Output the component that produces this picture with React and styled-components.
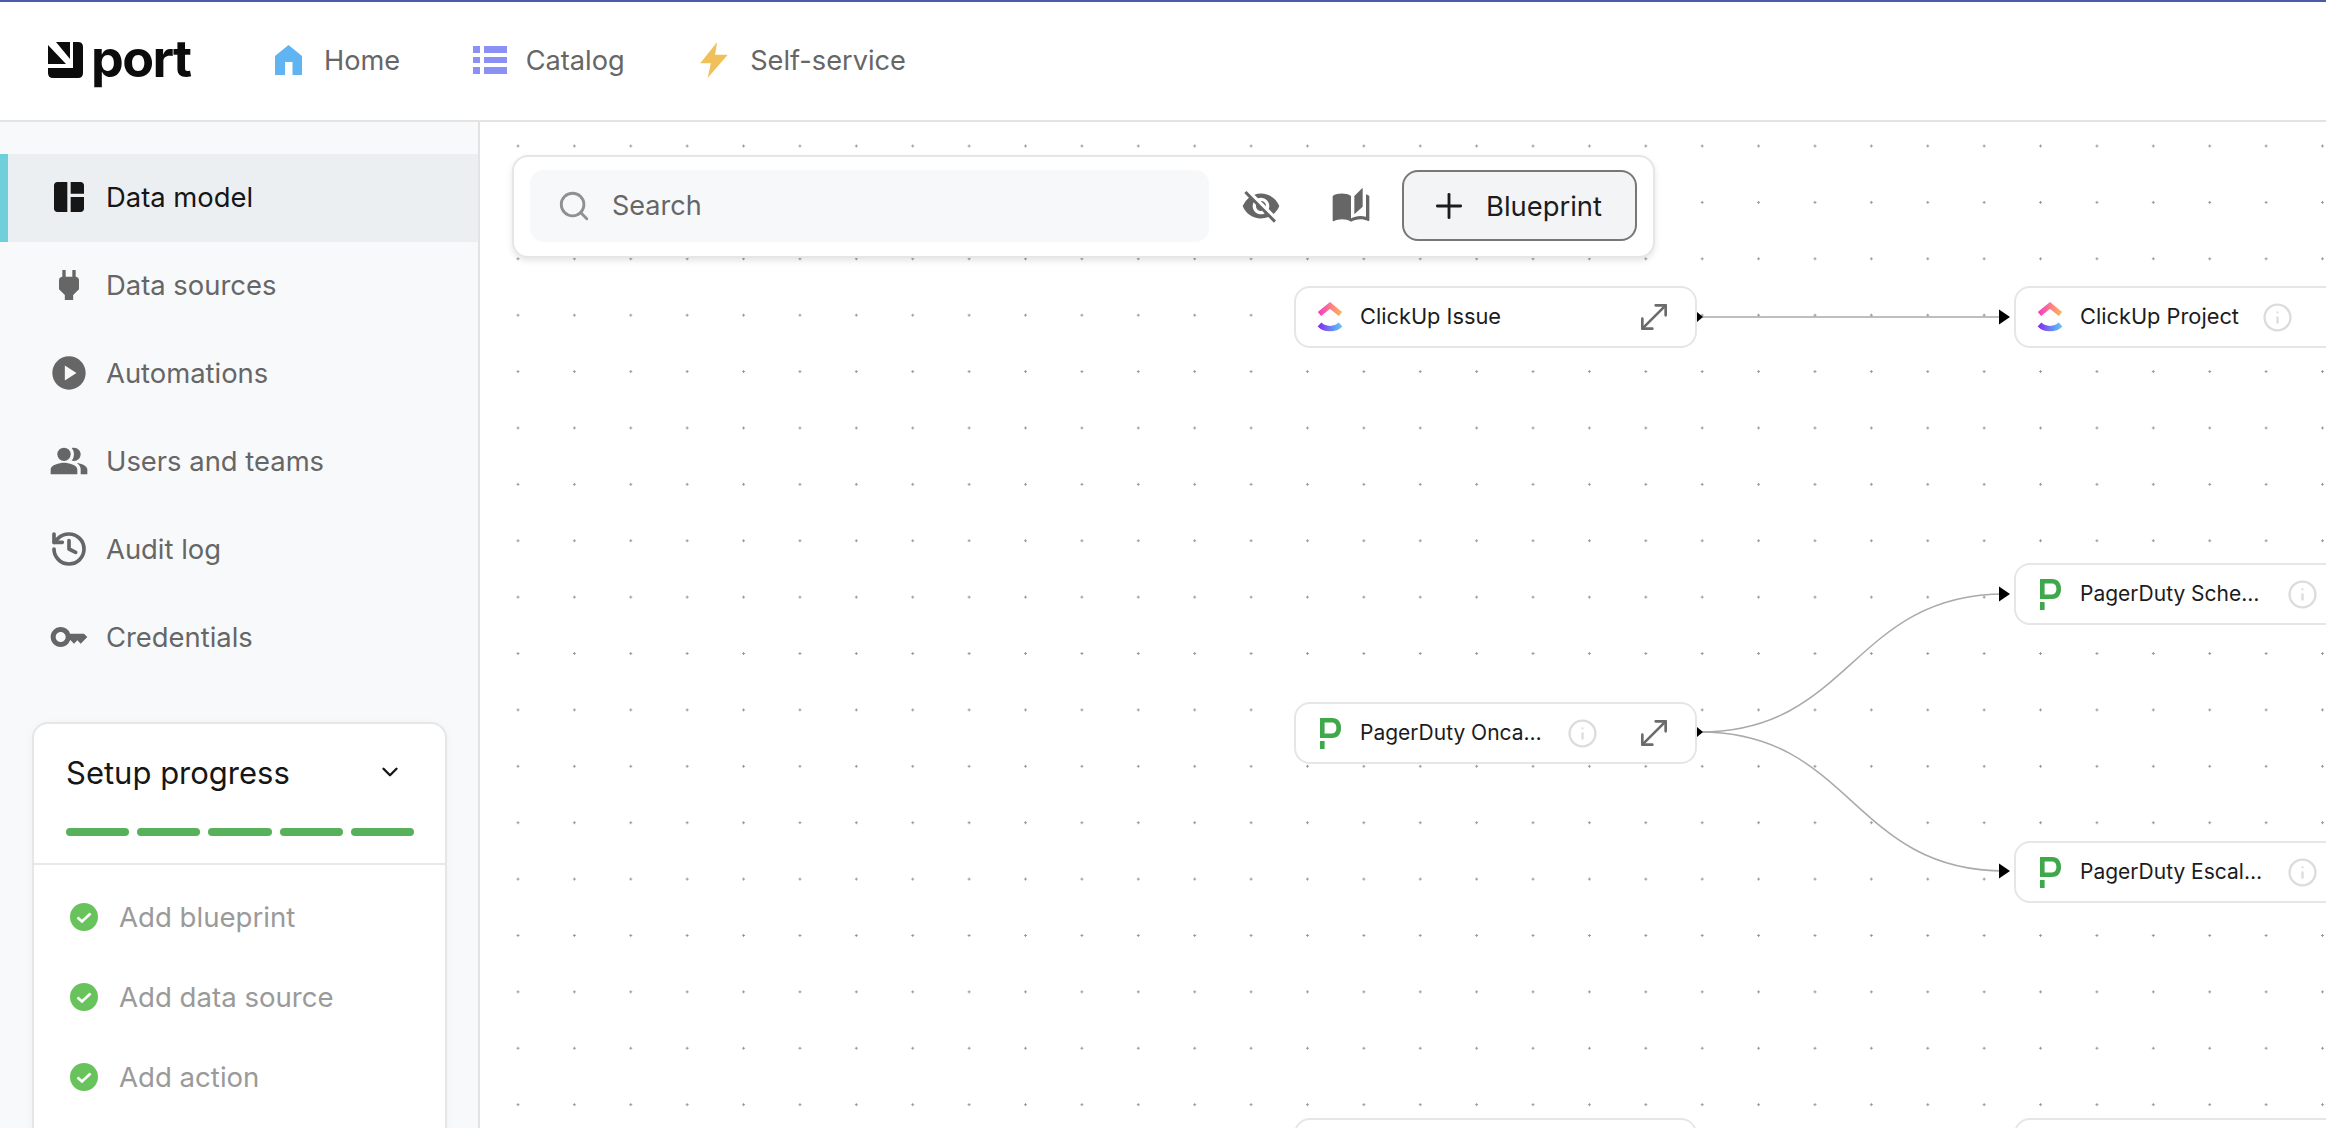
import React, { useId } from 'react';
import styled, { createGlobalStyle } from 'styled-components';
import { ChevronDown, History, Info, MoveDiagonal, Plus, Search } from 'lucide-react';
import {
  MdAutoStories,
  MdKey,
  MdPeopleAlt,
  MdPlayCircle,
  MdPower,
  MdSpaceDashboard,
  MdVisibilityOff,
} from 'react-icons/md';

const GlobalStyle = createGlobalStyle`
  html, body {
    margin: 0;
    height: 100%;
    overflow: hidden;
    background: #fff;
    font-family: 'Inter', 'Liberation Sans', sans-serif;
  }
  * { box-sizing: border-box; }
`;

const Page = styled.div`
  display: flex;
  flex-direction: column;
  height: 100vh;
  overflow: hidden;
`;

const Header = styled.header`
  display: flex;
  align-items: center;
  flex: 0 0 122px;
  padding: 0 0 2px 48px;
  background: #fff;
  border-top: 2px solid #4a5ca8;
  border-bottom: 2px solid #e3e3e3;
`;

const Logo = styled.div`
  display: flex;
  align-items: center;
  gap: 8px;
  width: 144px;
`;

const LogoText = styled.span`
  margin-top: -3px;
  font-size: 52px;
  font-weight: 700;
  line-height: 52px;
  letter-spacing: -1.6px;
  color: #0c0c0c;
`;

const Nav = styled.nav`
  display: flex;
  align-items: center;
  gap: 72.5px;
  margin-left: 79px;
`;

const NavItem = styled.a`
  display: flex;
  align-items: center;
  gap: 19px;
  font-size: 27.2px;
  color: #666;
`;

const NavIcon = styled.span`
  display: flex;
  justify-content: center;
  width: 34px;
`;

const Main = styled.div`
  display: flex;
  flex: 1;
  min-height: 0;
`;

const Sidebar = styled.aside`
  flex: 0 0 480px;
  padding-top: 32px;
  background: #f8f9fb;
  border-right: 2px solid #e3e3e3;
  overflow: hidden;
`;

const Menu = styled.ul`
  margin: 0;
  padding: 0;
  list-style: none;
`;

const MenuItem = styled.li`
  display: flex;
  align-items: center;
  gap: 17px;
  height: 88px;
  padding: 0 0 2px 41px;
  font-size: 27.4px;
  color: ${(p) => (p.$active ? '#161616' : '#666')};
  background: ${(p) => (p.$active ? '#eceff2' : 'transparent')};
  border-left: 8px solid ${(p) => (p.$active ? '#6fd0dc' : 'transparent')};
`;

const SetupCard = styled.section`
  width: 415px;
  min-height: 520px;
  margin: 40px 0 0 32px;
  background: #fff;
  border: 2px solid #e6e6e6;
  border-radius: 16px;
  box-shadow: 0 2px 10px rgba(0, 0, 0, 0.04);
`;

const SetupHead = styled.div`
  height: 141px;
  padding: 28px 31px 0 32px;
  border-bottom: 2px solid #e8e8ea;
`;

const SetupTitleRow = styled.div`
  display: flex;
  align-items: center;
  justify-content: space-between;
  height: 40px;
  padding-right: 11px;
`;

const SetupTitle = styled.h2`
  margin: 0;
  font-size: 31px;
  font-weight: 400;
  color: #161616;
`;

const Steps = styled.div`
  display: flex;
  gap: 8px;
  margin-top: 36px;
`;

const Step = styled.span`
  flex: 1;
  height: 8px;
  background: #58b05a;
  border-radius: 4px;
`;

const TaskList = styled.ul`
  margin: 0;
  padding: 12px 0 0 36px;
  list-style: none;
`;

const Task = styled.li`
  display: flex;
  align-items: center;
  gap: 21px;
  height: 80px;
  font-size: 27.6px;
  color: #9a9a9a;
`;

const Canvas = styled.main`
  position: relative;
  flex: 1;
  overflow: hidden;
  background-color: #fff;
  background-image: radial-gradient(circle, #9a9a9a 1.1px, transparent 1.4px);
  background-size: 56.4px 56.4px;
  background-position: 9.8px -4.2px;
`;

const Edges = styled.svg`
  position: absolute;
  inset: 0;
  width: 100%;
  height: 100%;
  pointer-events: none;
`;

const Toolbar = styled.div`
  position: absolute;
  top: 33px;
  left: 32px;
  display: flex;
  align-items: center;
  gap: 14px;
  width: 1143px;
  height: 103px;
  padding: 0 0 2px 16px;
  background: #fff;
  border: 2px solid #e6e6e6;
  border-radius: 16px;
  box-shadow: 0 3px 6px rgba(0, 0, 0, 0.1);
`;

const SearchField = styled.div`
  display: flex;
  align-items: center;
  gap: 21px;
  flex: 0 0 679px;
  height: 72px;
  padding-left: 27px;
  font-size: 27px;
  color: #666;
  background: #f7f8fa;
  border-radius: 14px;
`;

const ToolIcon = styled.span`
  display: flex;
  align-items: center;
  justify-content: center;
  width: 76px;
  color: #666;
`;

const AddButton = styled.button`
  display: flex;
  align-items: center;
  gap: 17px;
  width: 235px;
  height: 71px;
  margin-left: -1px;
  padding: 0 0 0 25px;
  font: inherit;
  font-size: 27.4px;
  color: #1c1c1c;
  background: #f3f4f6;
  border: 2px solid #777;
  border-radius: 16px;
`;

const Node = styled.div`
  position: absolute;
  top: ${(p) => p.$y}px;
  left: ${(p) => p.$x}px;
  display: flex;
  align-items: center;
  gap: 23px;
  width: 403px;
  height: 62px;
  padding: 0 21px;
  background: #fff;
  border: 2px solid #e6e6e6;
  border-radius: 16px;
`;

const NodeIcon = styled.span`
  display: flex;
  justify-content: center;
  flex: 0 0 26px;
  margin-right: -6px;
`;

const NodeLabel = styled.span`
  flex: none;
  min-width: ${(p) => (p.$truncated ? '184px' : '0')};
  margin-top: -2px;
  font-size: ${(p) => (p.$truncated ? '21px' : '21.8px')};
  color: #1c1c1c;
  white-space: nowrap;
`;

const ExpandIcon = styled(MoveDiagonal)`
  margin-left: auto;
  color: #6b6b6b;
`;

const HomeIcon = () => (
  <svg width="27" height="30" viewBox="0 0 27 30">
    <path fill="#60b4f2" d="M13.5 0 27 11V30H17.5V17H10V30H0V11Z" />
  </svg>
);

const CatalogIcon = () => (
  <svg width="34" height="28" viewBox="0 0 34 28" fill="#8b90f5">
    <rect x="0" y="0" width="7" height="7" />
    <rect x="11" y="0" width="23" height="7" />
    <rect x="0" y="11" width="7" height="6" />
    <rect x="11" y="11" width="23" height="6" />
    <rect x="0" y="21" width="7" height="7" />
    <rect x="11" y="21" width="23" height="7" />
  </svg>
);

const BoltIcon = () => (
  <svg width="28" height="36" viewBox="0 0 26 34">
    <path fill="#f0c05a" d="M16 0 0 20H10L7 34 26 12H14Z" />
  </svg>
);

const PortMark = () => (
  <svg width="35" height="36" viewBox="0 0 35 36" fill="#0c0c0c">
    <path d="M8 0H22V17Z" />
    <path d="M0 3V22H18Z" />
    <path d="M25 0H30Q35 0 35 5V31Q35 36 30 36H5Q0 36 0 31V26H25Z" />
  </svg>
);

const ClickUpLogo = () => {
  const id = useId();
  return (
    <svg width="26" height="30" viewBox="0 0 26 30" fill="none" strokeWidth="5.4">
      <defs>
        <linearGradient id={`${id}top`} x1="0" y1="0" x2="1" y2="0">
          <stop offset="0" stopColor="#f63fc0" />
          <stop offset="1" stopColor="#fdb35c" />
        </linearGradient>
        <linearGradient id={`${id}low`} x1="0" y1="0" x2="1" y2="0">
          <stop offset="0" stopColor="#8134f0" />
          <stop offset="1" stopColor="#5fc0f8" />
        </linearGradient>
      </defs>
      <path d="M2.5 12 13 3.5 23.5 12" stroke={`url(#${id}top)`} />
      <path d="M2.5 22.5C8 28 18 28 23.5 22.5" stroke={`url(#${id}low)`} />
    </svg>
  );
};

const PagerDutyLogo = () => (
  <svg width="21" height="31" viewBox="0 0 21 31" fill="#3fa84a">
    <path
      fillRule="evenodd"
      d="M0 0H12C18 0 21 4 21 10C21 16 18 20 12 20H0ZM4.6 4.6V15.4H12C15 15.4 16.4 13 16.4 10C16.4 7 15 4.6 12 4.6Z"
    />
    <rect x="0" y="23" width="4.6" height="8" />
  </svg>
);

const DoneIcon = () => (
  <svg width="28" height="28" viewBox="0 0 28 28">
    <circle cx="14" cy="14" r="14" fill="#69c35c" />
    <path d="M7.5 14.5 12 18.5 20.5 10.5" fill="none" stroke="#fff" strokeWidth="2.6" />
  </svg>
);

const AuditIcon = (props) => <History strokeWidth={2.2} {...props} />;

const menu = [
  { label: 'Data model', icon: MdSpaceDashboard, active: true },
  { label: 'Data sources', icon: MdPower },
  { label: 'Automations', icon: MdPlayCircle },
  { label: 'Users and teams', icon: MdPeopleAlt },
  { label: 'Audit log', icon: AuditIcon },
  { label: 'Credentials', icon: MdKey },
];

const tasks = ['Add blueprint', 'Add data source', 'Add action'];

const nodes = [
  { x: 814, y: 164, label: 'ClickUp Issue', logo: ClickUpLogo, expand: true },
  { x: 1534, y: 164, label: 'ClickUp Project', logo: ClickUpLogo, info: true },
  { x: 814, y: 580, label: 'PagerDuty Onca…', logo: PagerDutyLogo, info: true, expand: true, truncated: true },
  { x: 1534, y: 441, label: 'PagerDuty Sche…', logo: PagerDutyLogo, info: true, truncated: true },
  { x: 1534, y: 719, label: 'PagerDuty Escal…', logo: PagerDutyLogo, info: true, truncated: true },
  { x: 814, y: 996 },
  { x: 1534, y: 996 },
];

const arrows = [
  { x: 1530, y: 195 },
  { x: 1530, y: 472 },
  { x: 1530, y: 749 },
];

const App = () => (
  <Page>
    <GlobalStyle />
    <Header>
      <Logo>
        <PortMark />
        <LogoText>port</LogoText>
      </Logo>
      <Nav>
        <NavItem>
          <NavIcon><HomeIcon /></NavIcon>
          Home
        </NavItem>
        <NavItem>
          <NavIcon><CatalogIcon /></NavIcon>
          Catalog
        </NavItem>
        <NavItem>
          <NavIcon><BoltIcon /></NavIcon>
          Self-service
        </NavItem>
      </Nav>
    </Header>
    <Main>
      <Sidebar>
        <Menu>
          {menu.map(({ label, icon: Icon, active }) => (
            <MenuItem key={label} $active={active}>
              <Icon size={40} />
              {label}
            </MenuItem>
          ))}
        </Menu>
        <SetupCard>
          <SetupHead>
            <SetupTitleRow>
              <SetupTitle>Setup progress</SetupTitle>
              <ChevronDown size={26} strokeWidth={2.2} color="#161616" />
            </SetupTitleRow>
            <Steps>
              {[0, 1, 2, 3, 4].map((step) => (
                <Step key={step} />
              ))}
            </Steps>
          </SetupHead>
          <TaskList>
            {tasks.map((task) => (
              <Task key={task}>
                <DoneIcon />
                {task}
              </Task>
            ))}
          </TaskList>
        </SetupCard>
      </Sidebar>
      <Canvas>
        <Edges>
          <g fill="none" stroke="#a9a9ae" strokeWidth="1.5">
            <path d="M1220 195H1525" />
            <path d="M1220 610C1372 610 1372 472 1525 472" />
            <path d="M1220 610C1372 610 1372 749 1525 749" />
          </g>
          <path d="M1217 190 1223 195 1217 200Z" fill="#000" />
          <path d="M1217 605 1223 610 1217 615Z" fill="#000" />
          {arrows.map(({ x, y }) => (
            <path key={y} d={`M${x - 11} ${y - 7.5}L${x} ${y}L${x - 11} ${y + 7.5}Z`} fill="#000" />
          ))}
        </Edges>
        <Toolbar>
          <SearchField>
            <Search size={34} strokeWidth={2} color="#909090" />
            Search
          </SearchField>
          <ToolIcon><MdVisibilityOff size={40} /></ToolIcon>
          <ToolIcon><MdAutoStories size={40} /></ToolIcon>
          <AddButton>
            <Plus size={40} strokeWidth={1.7} />
            Blueprint
          </AddButton>
        </Toolbar>
        {nodes.map(({ x, y, label, logo: NodeLogo, info, expand, truncated }) => (
          <Node key={`${x}-${y}`} $x={x} $y={y}>
            {label && (
              <>
                <NodeIcon><NodeLogo /></NodeIcon>
                <NodeLabel $truncated={truncated}>{label}</NodeLabel>
              </>
            )}
            {info && <Info size={31} strokeWidth={1.8} color="#dcdcdc" />}
            {expand && <ExpandIcon size={40} strokeWidth={1.6} />}
          </Node>
        ))}
      </Canvas>
    </Main>
  </Page>
);

export default App;
